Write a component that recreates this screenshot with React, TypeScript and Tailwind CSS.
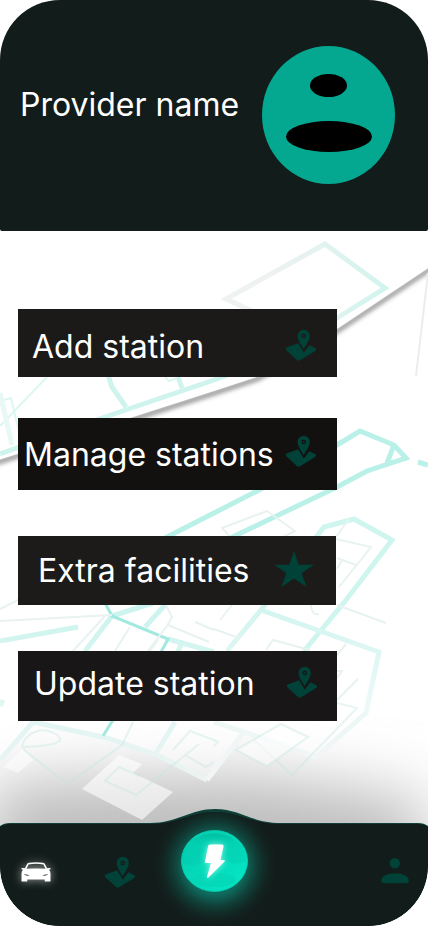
import React from "react";

type IconProps = { className?: string };

function MapPin({ className }: IconProps) {
  return (
    <svg viewBox="0 0 32 32" className={className} aria-hidden="true">
      <path
        d="M13.200 14.200 2.100 18.300C.6 19 .5 20.500 1.600 21.500l10 9.200c1.300 1.200 2.500 1.300 3.900.4l14.700-9.200c1.300-.9 1.200-2.200-.2-2.800l-5.600-2.900-5.600 7.400z"
        fill="#004237"
      />
      <path
        fillRule="evenodd"
        d="M18.700.7a6.100 6.100 0 0 0-6.100 6.100c0 4.500 3.600 9.300 6.100 13.100 2.500-3.800 6.100-8.600 6.100-13.100A6.100 6.100 0 0 0 18.700.7zm0 3.900a2.300 2.300 0 1 1 0 4.600 2.300 2.300 0 0 1 0-4.600z"
        fill="#004237"
      />
      <circle cx="18.700" cy="6.900" r=".9" fill="#004237" />
    </svg>
  );
}

function Star({ className }: IconProps) {
  return (
    <svg viewBox="0 0 40 36" className={className} aria-hidden="true">
      <path d="M20 0l4.600 13.700H40L27.700 22.100 32.500 36 20 27.500 7.500 36l4.800-13.900L0 13.700h15.400z" fill="#004237" />
    </svg>
  );
}

function Car({ className }: IconProps) {
  return (
    <svg viewBox="0 0 30 20" className={className} aria-hidden="true">
      <path
        fillRule="evenodd"
        fill="#fff"
        d="M8 .7Q15-.4 22 .7q1.600.3 2.200 1.700L26 6.200l2.800-.2q.9 0 .9.800 0 .7-1.700.9 1.500 1.400 1.500 4V19q0 .6-.6.600h-4.600q-.6 0-.6-.6v-1.500H6.300V19q0 .6-.6.600H1.100q-.6 0-.6-.6v-7.300q0-2.600 1.500-4Q.3 7.500.3 6.800.3 6 1.200 6l2.800.2 1.800-3.800Q6.400 1 8 .7zM7.600 2.600 5.500 6.800q9.500-.8 19 0l-2.100-4.200Q15 1 7.600 2.600zM3 12q1 2 5.800 2.100Q7 12.200 3 12zm24 0q-4 .2-5.800 2.100Q26 14 27 12z"
      />
    </svg>
  );
}

function Person({ className }: IconProps) {
  return (
    <svg viewBox="0 0 28 26" className={className} aria-hidden="true" fill="#004237">
      <circle cx="13.800" cy="5.300" r="5.200" />
      <path d="M3 25.300C1 25.300.3 24 .3 22.300.3 18.500 6.500 15.300 14 15.300s13.700 3.200 13.700 7c0 1.700-.7 3-2.700 3z" />
    </svg>
  );
}

function Charge({ className }: IconProps) {
  return (
    <svg viewBox="0 0 67 62" className={className} aria-hidden="true">
      <defs>
        <linearGradient id="lens" x1="0" y1="0" x2="1" y2="1">
          <stop offset="0" stopColor="#04cdb0" />
          <stop offset="1" stopColor="#04e8c6" />
        </linearGradient>
        <linearGradient id="gloss" x1="0" y1="0" x2="0" y2="1">
          <stop offset="0" stopColor="#02b89c" />
          <stop offset="1" stopColor="#05dcbd" stopOpacity="0.300" />
        </linearGradient>
        <filter id="glow" x="-60%" y="-40%" width="220%" height="180%">
          <feGaussianBlur stdDeviation="3" />
        </filter>
      </defs>
      <ellipse cx="33.500" cy="31" rx="33" ry="30.500" fill="url(#lens)" stroke="#07c5a8" />
      <path d="M1 31C1 15 15 3 33 3s32 11 32 28C54 38 48 29 36 30 22 31 13 38 3 34z" fill="#03c8ab" opacity="0.350" />
      <ellipse cx="33" cy="12" rx="20" ry="8.500" fill="url(#gloss)" opacity="0.700" />
      <ellipse cx="33" cy="50" rx="22" ry="7" fill="#03d1b3" opacity="0.500" />
      <path d="M29 14.500H41q2 0 1.500 2L39.500 30H43q1.500.3.500 1.500L27.500 47.500q-2 1-1.500-1L30 33H24.500Q23.500 33 24 31.500L27 16.500Q27.500 14.500 29 14.500z" fill="#8ffbe9" filter="url(#glow)" />
      <path d="M29 14.500H41q2 0 1.500 2L39.500 30H43q1.500.3.500 1.500L27.500 47.500q-2 1-1.500-1L30 33H24.500Q23.500 33 24 31.500L27 16.500Q27.500 14.500 29 14.500z" fill="#fff" />
    </svg>
  );
}

function StreetMap() {
  return (
    <svg
      viewBox="0 231 428 695"
      preserveAspectRatio="xMidYMin slice"
      className="absolute inset-0 h-full w-full"
      aria-hidden="true"
      fill="none"
    >
      <defs>
        <linearGradient id="block" x1="221" y1="290" x2="387" y2="290" gradientUnits="userSpaceOnUse">
          <stop offset="0.300" stopColor="#eef2f1" />
          <stop offset="1" stopColor="#d2f4ee" />
        </linearGradient>
        <linearGradient id="road" x1="0" y1="600" x2="0" y2="780" gradientUnits="userSpaceOnUse">
          <stop offset="0" stopColor="#cbf4ee" />
          <stop offset="0.600" stopColor="#e0f6f3" />
          <stop offset="1" stopColor="#ebf3f2" />
        </linearGradient>
        <linearGradient id="outer" x1="330" y1="610" x2="330" y2="760" gradientUnits="userSpaceOnUse">
          <stop offset="0" stopColor="#d3f5f0" />
          <stop offset="0.600" stopColor="#eaf9f7" />
          <stop offset="1" stopColor="#f2f5f5" />
        </linearGradient>
        <filter id="cast" x="-10%" y="-10%" width="120%" height="130%">
          <feGaussianBlur stdDeviation="2" />
        </filter>
        <filter id="haze" x="-30%" y="-60%" width="160%" height="220%">
          <feGaussianBlur stdDeviation="32" />
        </filter>
      </defs>

      <path d="M-5 461L130 418 214 391 257 377Q300 354 337 329L433 265" transform="translate(0 2)" stroke="#999" strokeWidth="5" filter="url(#cast)" />
      <path d="M-5 461L130 418 214 391 257 377Q300 354 337 329L433 265V231H-5z" fill="#fff" />
      <path d="M428 273L416 376" stroke="#ececec" strokeWidth="2" />

      <path d="M337 318L385 288 325 244 226 299 252 311" stroke="url(#block)" strokeWidth="5" />
      <path d="M337 318Q280 357 214 380L93 421 0 454M108 375l4 12 14 20M178 377l4 11" stroke="#cff4ee" strokeWidth="5" />
      <path d="M47 377L0 426M0 401l11-3 8 34M165 377l4 4 8-3" stroke="#dcf7f2" strokeWidth="2" />
      <path d="M0 393L12 445" stroke="#e8f8f5" strokeWidth="5" />

      <path d="M-20 880L-10 785Q120 775 250 775L425 800 425 890z" fill="#bcbcbc" filter="url(#haze)" />
      <path d="M0 760L33 724 107 738 157 755 207 780 244 732 316 757 366 713V700H0z" fill="#fff" opacity="0.500" />

      <path d="M110 566L214 513 261 489 337 445 360 431 394 445 406 458 367 471 337 487 220 543M394 445l-7 18M418 462l10 3" stroke="#b9f0e8" strokeWidth="5" />
      <path d="M314 540L324 527 354 519 392 540 346 600 304 651" stroke="#cff5ef" strokeWidth="5" />
      <path
        d="M112 616L85 651M112 616l41-13M165 605l-20 22M168 639l46 13M0 641l78-14M181 645l-6 12M33 722L0 760M33 722l74 16 50 17 50 25M175 722l-20 33M0 706l3-6"
        stroke="url(#road)"
        strokeWidth="5"
      />
      <path d="M266 603l-5 7 118 42-13 61-50 44-69-24-33-11M261 610l-34 41M207 780l37-48" stroke="url(#outer)" strokeWidth="5" />
      <path d="M105 603l7 13 56 23-8 15M113 720l-10 16" stroke="#a2e9df" strokeWidth="3" />

      <g stroke="#e8f3f1" strokeWidth="2">
        <path d="M231 538l-9-10 45-17 28 20-14 7M336 539l35 8-32 40M349 519l-13 18M337 558l19 7M342 560l-5 9" />
        <path d="M0 621l112-6M0 609l18-9M105 616l-32 35M166 605l6 12-5 9-20 26M168 625l41 17M195 622l19 8M130 627l-15 24M158 640l-8 11" />
        <path d="M311 603q0 13 8 11M214 629l25 9M232 605l-12 15M266 650l7-10 37 10M346 644l-9 11M337 605l49 18M337 671h5l-5 7M358 679l-21 21" />
      </g>
      <path d="M23 749l10 11-15 13-15-6z" fill="#fff" opacity="0.500" />
      <path d="M119 755l23 9-9 9 40 19-31 28-60-31z" fill="#fff" opacity="0.600" />
      <g stroke="#c4e6e0" strokeOpacity="0.400" strokeWidth="2">
        <path d="M337 703l20 5-65 67-38-35" />
        <path d="M236 750l45-26 27 13-41 29z" fill="#fff" fillOpacity="0.500" />
        <path d="M133 722l-11 23-55 39-44-35" />
        <path d="M22 747C24 734 40 726 54 733 68 741 58 746 22 747z" />
        <path d="M173 750l17-19 24 9M185 755l21 12 8-5M199 744l-63 51-31-14 14-14 21 9M214 740l4 2-4 4" />
      </g>
    </svg>
  );
}

function Header() {
  return (
    <header className="relative flex h-[231px] items-start justify-between rounded-t-[60px] rounded-b-[2px] bg-[#121c1a] pt-[46px] pr-[33px] pl-5">
      <h1 className="pt-[39px] text-[32px] leading-[40px] whitespace-nowrap text-white">Provider name</h1>
      <div className="flex h-[138px] w-[133px] shrink-0 flex-col items-center rounded-[50%] bg-[#04a78f] pt-[28px]">
        <div className="h-[23px] w-[37px] rounded-[50%] bg-black" />
        <div className="mt-6 h-[31px] w-[86px] rounded-[50%] bg-black" />
      </div>
    </header>
  );
}

const card = "flex justify-between text-left text-[32px] leading-[40px] whitespace-nowrap text-white";

function Actions() {
  return (
    <section className="relative flex flex-col pt-[78px] pr-[91px] pl-[18px]">
      <button type="button" className={`${card} h-[68px] bg-[#1c1a18] pt-[18px] pr-5 pl-[14px]`}>
        Add station
        <MapPin className="mt-0.5 size-8" />
      </button>
      <button type="button" className={`${card} mt-[41px] h-[72px] bg-[#12110f] pt-[17px] pr-5 pl-1.5`}>
        Manage stations
        <MapPin className="size-8" />
      </button>
      <button type="button" className={`${card} mt-[46px] mr-px h-[69px] bg-[#1c1b19] pt-[15px] pr-[22px] pl-5`}>
        Extra facilities
        <Star className="h-9 w-10" />
      </button>
      <button type="button" className={`${card} mt-[46px] h-[70px] bg-[#181617] pt-[13px] pr-[19px] pl-4`}>
        Update station
        <MapPin className="mt-0.5 size-8" />
      </button>
    </section>
  );
}

function BottomNav() {
  return (
    <nav className="relative mt-auto h-[117px] overflow-hidden rounded-b-[60px]" aria-label="Main">
      <svg viewBox="0 0 428 117" preserveAspectRatio="none" className="absolute inset-0 h-full w-full" aria-hidden="true">
        <defs>
          <radialGradient id="halo" cx="215" cy="56" r="66" gradientUnits="userSpaceOnUse">
            <stop offset="0.450" stopColor="#0e6b5d" />
            <stop offset="0.600" stopColor="#10453d" />
            <stop offset="0.800" stopColor="#122824" stopOpacity="0.700" />
            <stop offset="1" stopColor="#121c1a" stopOpacity="0" />
          </radialGradient>
        </defs>
        <path d="M0 17Q4 14 10 14H150C178 14 190 0 215 0S252 14 280 14H418Q424 14 428 17V117H0z" fill="#0e3f38" />
        <path d="M0 18Q4 15 10 15H150C178 15 190 3 215 3S252 15 280 15H418Q424 15 428 18V117H0z" fill="#121c1a" />
        <path d="M150 15C178 15 190 3 215 3S252 15 280 15V117H150z" fill="url(#halo)" />
      </svg>
      <div className="relative flex h-full items-start pt-[21px] pr-[19px] pl-[21px]">
        <button type="button" aria-label="Cars" className="mt-8 drop-shadow-[0_0_5px_#ffffff99]">
          <Car className="h-5 w-[30px]" />
        </button>
        <button type="button" aria-label="Stations" className="mt-[26px] ml-[53px]">
          <MapPin className="size-8" />
        </button>
        <button type="button" aria-label="Charge" className="ml-[45px]">
          <Charge className="h-[62px] w-[67px]" />
        </button>
        <button type="button" aria-label="Profile" className="mt-[28px] ml-auto">
          <Person className="h-[26px] w-7" />
        </button>
      </div>
    </nav>
  );
}

export default function App() {
  return (
    <div className="relative flex min-h-screen flex-col bg-white font-[Inter,sans-serif]">
      <Header />
      <main className="relative flex flex-1 flex-col overflow-hidden rounded-b-[60px]">
        <StreetMap />
        <Actions />
        <BottomNav />
      </main>
    </div>
  );
}
